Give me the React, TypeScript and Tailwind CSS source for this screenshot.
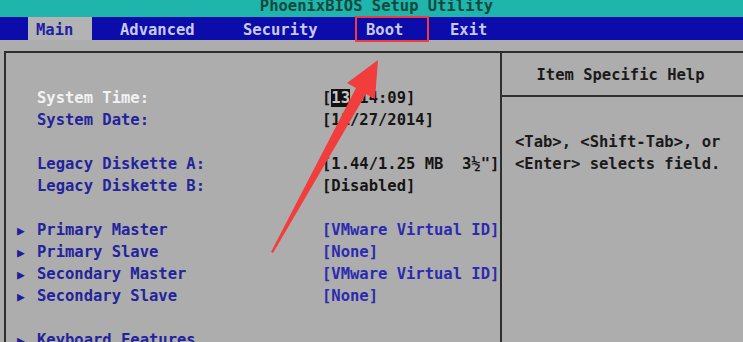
import React from "react";

const font = { fontFamily: '"DejaVu Sans Mono", "Liberation Mono", monospace' };

type Row = {
  arrow?: boolean;
  label?: string;
  value?: React.ReactNode;
  labelClass?: string;
  valueClass?: string;
};

const rows: Row[] = [
  {
    label: "System Time:",
    labelClass: "text-[#f2f2f2]",
    value: (
      <>
        [<span className="bg-[#111] text-[#c8c8c8]">13</span>:14:09]
      </>
    ),
    valueClass: "text-[#151515]",
  },
  { label: "System Date:", value: "[11/27/2014]", valueClass: "text-[#151515]" },
  {},
  { label: "Legacy Diskette A:", value: "[1.44/1.25 MB  3½\"]", valueClass: "text-[#151515]" },
  { label: "Legacy Diskette B:", value: "[Disabled]", valueClass: "text-[#151515]" },
  {},
  { arrow: true, label: "Primary Master", value: "[VMware Virtual ID]", valueClass: "text-[#2b2bb0]" },
  { arrow: true, label: "Primary Slave", value: "[None]", valueClass: "text-[#2b2bb0]" },
  { arrow: true, label: "Secondary Master", value: "[VMware Virtual ID]", valueClass: "text-[#2b2bb0]" },
  { arrow: true, label: "Secondary Slave", value: "[None]", valueClass: "text-[#2b2bb0]" },
  {},
  { arrow: true, label: "Keyboard Features" },
];

export default function App() {
  return (
    <div
      className="relative w-[743px] h-[342px] overflow-hidden bg-[#adadad] text-[15.5px] font-bold"
      style={font}
    >
      {/* Title bar */}
      <div className="h-[17px] bg-[#1fb4ac] overflow-hidden flex justify-center">
        <div className="mt-[-4px] leading-[20px] text-[#124a3c] pl-[10px]">PhoenixBIOS Setup Utility</div>
      </div>

      {/* Menu bar */}
      <div className="h-[23px] bg-[#0c0cab] flex items-stretch text-[#c9c9ec] leading-[23px] pt-[2px]">
        <div className="ml-[28px] mt-[-2px] pt-[2px] w-[64px] pl-[8px] bg-[#b3b3b3] text-[#1e1ea6]">Main</div>
        <div className="ml-[28px] w-[74px]">Advanced</div>
        <div className="ml-[49px] w-[74px]">Security</div>
        <div className="ml-[49px] w-[37px]">Boot</div>
        <div className="ml-[47px] w-[37px]">Exit</div>
      </div>

      {/* Frame */}
      <div className="mt-[11px] ml-[4px] flex border-t-2 border-l-2 border-[#2e2e2e] h-[300px]">
        <div className="w-[496px] border-r-2 border-[#2e2e2e] pt-[35px]">
          {rows.map((r, i) => (
            <div key={i} className="h-[22px] flex items-center whitespace-pre">
              <span className="w-[31px] pl-[11px] text-[#1e1e9a] text-[13px]">{r.arrow ? "▶" : ""}</span>
              <span className={`w-[285px] ${r.labelClass ?? "text-[#23239c]"}`}>{r.label ?? ""}</span>
              <span className={r.valueClass}>{r.value ?? ""}</span>
            </div>
          ))}
        </div>
        <div className="flex-1 flex flex-col">
          <div className="h-[44px] pt-[3px] border-b-2 border-[#2e2e2e] flex items-center justify-center text-[#1a1a1a] pr-[4px]">
            Item Specific Help
          </div>
          <div className="pt-[34px] pl-[13px] text-[#1a1a1a] leading-[22px] whitespace-pre">
            <div>{"<Tab>, <Shift-Tab>, or"}</div>
            <div>{"<Enter> selects field."}</div>
          </div>
        </div>
      </div>

      {/* Red highlight box around Boot */}
      <div className="absolute left-[355px] top-[16px] w-[74px] h-[26px] border-2 border-[#f23a3a]" />

      {/* Red arrow annotation */}
      <svg className="absolute left-0 top-0 pointer-events-none" width="743" height="342">
        <polygon
          points="378,60 347,83 356,88 271,252 273,253 366,94 375,99"
          fill="#f23d3d"
        />
      </svg>
    </div>
  );
}
